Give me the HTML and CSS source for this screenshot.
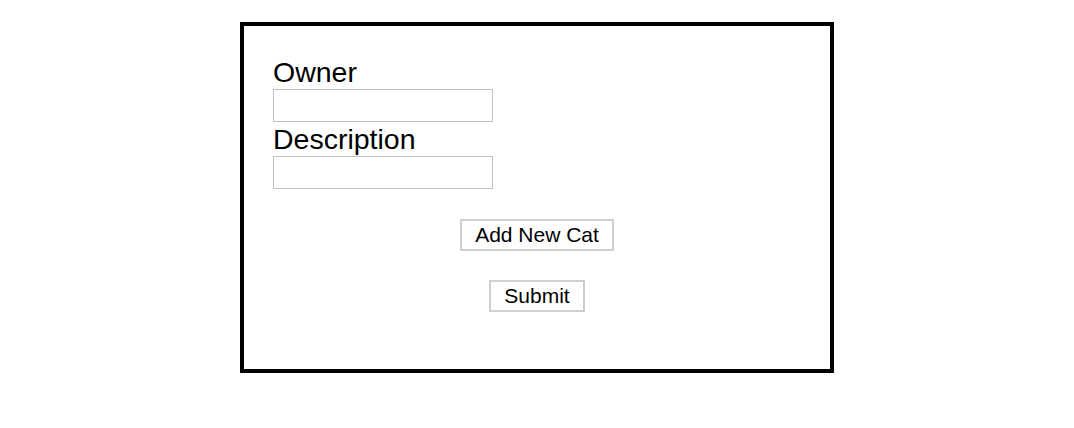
FILE: index.html
```html
<!DOCTYPE html>
<html>
<head>
<meta charset="utf-8">
<link rel="stylesheet" href="styles.css">
</head>
<body>
<form class="card">
  <label class="label" for="owner">Owner</label>
  <input class="field" id="owner" type="text">
  <label class="label" for="desc">Description</label>
  <input class="field" id="desc" type="text">
  <div class="actions">
    <button class="btn" type="button">Add New Cat</button>
    <button class="btn" type="submit">Submit</button>
  </div>
</form>
</body>
</html>
```
FILE: styles.css
```css
html, body {
  margin: 0;
  padding: 0;
  background: #ffffff;
}
body {
  font-family: "Liberation Sans", Arial, Helvetica, sans-serif;
  color: #000;
}
.card {
  box-sizing: border-box;
  width: 594px;
  height: 351px;
  margin: 22px auto 0;
  border: 4px solid #000;
  padding: 29px 29px 0;
  display: flex;
  flex-direction: column;
  align-items: flex-start;
}
.label {
  display: block;
  font-size: 28.5px;
  line-height: 34px;
}
.field {
  box-sizing: border-box;
  width: 220px;
  height: 33px;
  margin: 0;
  padding: 0 4px;
  border: 1px solid #c2c2c2;
  border-radius: 0;
  background: #fff;
  outline: none;
}
.actions {
  align-self: stretch;
  display: flex;
  flex-direction: column;
  align-items: center;
  gap: 29px;
  margin-top: 30px;
}
.btn {
  box-sizing: border-box;
  height: 32px;
  margin: 0;
  padding: 0 13px;
  border: 2px solid #cfcfcf;
  border-radius: 0;
  background: #fff;
  font-family: "Liberation Sans", Arial, Helvetica, sans-serif;
  font-size: 21px;
  line-height: 28px;
  color: #000;
}
```
